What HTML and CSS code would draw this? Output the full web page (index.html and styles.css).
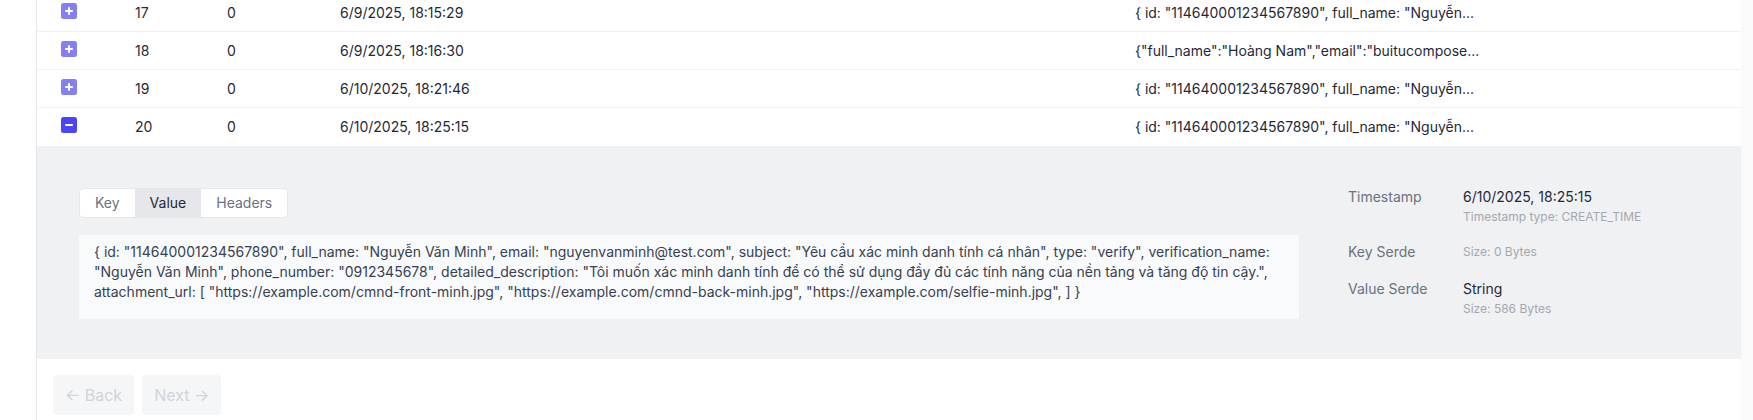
FILE: index.html
```html
<!DOCTYPE html>
<html lang="vi">
<head>
<meta charset="utf-8">
<title>Messages</title>
<link rel="stylesheet" href="styles.css">
</head>
<body>
<div class="page">
  <aside class="side"></aside>
  <main class="main">
    <div class="table">
      <div class="row">
        <div class="cell"><svg class="toggle plus" viewBox="0 0 16 16" width="16" height="16"><rect width="16" height="16" rx="2.5"/><path d="M8 4.2v7.6M4.2 8h7.6"/></svg></div>
        <div class="cell">17</div>
        <div class="cell">0</div>
        <div class="cell">6/9/2025, 18:15:29</div>
        <div class="cell">{ id: "114640001234567890", full_name: "Nguyễn...</div>
      </div>
      <div class="row">
        <div class="cell"><svg class="toggle plus" viewBox="0 0 16 16" width="16" height="16"><rect width="16" height="16" rx="2.5"/><path d="M8 4.2v7.6M4.2 8h7.6"/></svg></div>
        <div class="cell">18</div>
        <div class="cell">0</div>
        <div class="cell">6/9/2025, 18:16:30</div>
        <div class="cell">{"full_name":"Hoàng Nam","email":"buitucompose...</div>
      </div>
      <div class="row">
        <div class="cell"><svg class="toggle plus" viewBox="0 0 16 16" width="16" height="16"><rect width="16" height="16" rx="2.5"/><path d="M8 4.2v7.6M4.2 8h7.6"/></svg></div>
        <div class="cell">19</div>
        <div class="cell">0</div>
        <div class="cell">6/10/2025, 18:21:46</div>
        <div class="cell">{ id: "114640001234567890", full_name: "Nguyễn...</div>
      </div>
      <div class="row open">
        <div class="cell"><svg class="toggle minus" viewBox="0 0 16 16" width="16" height="16"><rect width="16" height="16" rx="2.5"/><path d="M4.2 8h7.6"/></svg></div>
        <div class="cell">20</div>
        <div class="cell">0</div>
        <div class="cell">6/10/2025, 18:25:15</div>
        <div class="cell">{ id: "114640001234567890", full_name: "Nguyễn...</div>
      </div>
      <div class="detail">
        <div class="content">
          <div class="tabs">
            <span class="tab">Key</span>
            <span class="tab active">Value</span>
            <span class="tab">Headers</span>
          </div>
          <div class="valuebox">{ id: "114640001234567890", full_name: "Nguyễn Văn Minh", email: "nguyenvanminh@test.com", subject: "Yêu cầu xác minh danh tính cá nhân", type: "verify", verification_name: "Nguyễn Văn Minh", phone_number: "0912345678", detailed_description: "Tôi muốn xác minh danh tính để có thể sử dụng đầy đủ các tính năng của nền tảng và tăng độ tin cậy.", attachment_url: [ "https://example.com/cmnd-front-minh.jpg", "https://example.com/cmnd-back-minh.jpg", "https://example.com/selfie-minh.jpg", ] }</div>
        </div>
        <dl class="meta">
          <div class="mrow">
            <dt>Timestamp</dt>
            <dd><div class="val">6/10/2025, 18:25:15</div><div class="sub">Timestamp type: CREATE_TIME</div></dd>
          </div>
          <div class="mrow">
            <dt>Key Serde</dt>
            <dd><div class="sub only">Size: 0 Bytes</div></dd>
          </div>
          <div class="mrow">
            <dt>Value Serde</dt>
            <dd><div class="val">String</div><div class="sub">Size: 586 Bytes</div></dd>
          </div>
        </dl>
      </div>
    </div>
    <div class="pager">
      <button class="btn" disabled>← Back</button>
      <button class="btn" disabled>Next →</button>
    </div>
  </main>
  <div class="track"></div>
</div>
</body>
</html>
```

FILE: styles.css
```css
* { box-sizing: border-box; }
html, body { margin: 0; padding: 0; background: #fff; }
body {
  font-family: Inter, "Noto Sans", "Liberation Sans", sans-serif;
  font-size: 14px;
  line-height: 20px;
  color: #1f2937;
}
.page {
  display: flex;
  height: 420px;
  overflow: hidden;
}
.side {
  width: 37px;
  flex: none;
  border-right: 1px solid #e5e7eb;
}
.main {
  flex: 1;
  min-width: 0;
  margin-top: -6px;
}
.track {
  width: 12px;
  flex: none;
  background: #fafafa;
}
.row {
  display: grid;
  grid-template-columns: 74px 92px 113px 795px 1fr;
  height: 38px;
  border-bottom: 1px solid #f0f0f1;
  padding-top: 9px;
}
.row.open { border-bottom: none; }
.cell {
  padding-left: 24px;
  white-space: nowrap;
  overflow: hidden;
}
.toggle { display: block; }
.toggle rect { fill: #4b45f8; }
.toggle.plus rect { fill: #8480f4; }
.toggle path { stroke: #fff; stroke-width: 2; stroke-linecap: butt; fill: none; }
.detail {
  display: flex;
  gap: 49px;
  background: #f0f1f3;
  padding: 42px 42px 40px 42px;
}
.content {
  flex: 1;
  min-width: 0;
  display: flex;
  flex-direction: column;
  align-items: flex-start;
  gap: 17px;
}
.tabs {
  display: inline-flex;
  background: #fff;
  border: 1px solid #e5e7eb;
  border-radius: 4px;
  overflow: hidden;
}
.tab {
  padding: 4px 15px;
  color: #6b7280;
}
.tab.active {
  background: #e5e7eb;
  color: #1f2937;
}
.valuebox {
  align-self: stretch;
  background: #f9fafb;
  padding: 7px 16px 17px 15px;
  color: #374151;
  height: 84px;
}
.meta {
  width: 351px;
  flex: none;
  margin: -1px 0 0 0;
  display: flex;
  flex-direction: column;
  gap: 17px;
}
.mrow {
  display: grid;
  grid-template-columns: 115px 1fr;
}
.mrow dt { color: #6b7280; }
.mrow dd { margin: 0; }
.val { color: #1f2937; }
.sub {
  font-size: 12px;
  line-height: 16px;
  margin-top: 2px;
  color: #a3a8b0;
}
.sub.only { line-height: 20px; margin-top: 0; }
.pager {
  display: flex;
  gap: 8px;
  padding: 16px 16px;
}
.btn {
  font-family: inherit;
  font-size: 16px;
  line-height: 24px;
  padding: 8px 12px;
  border: none;
  border-radius: 4px;
  background: #f5f6f7;
  color: #d0d4d9;
}
```
